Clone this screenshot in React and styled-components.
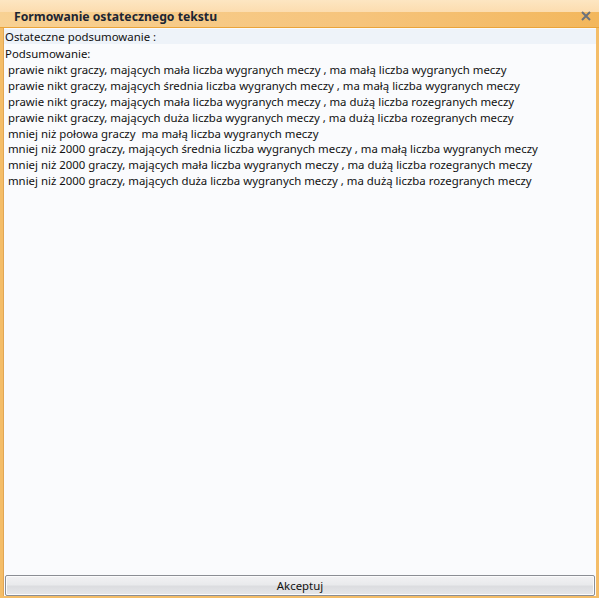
import React from "react";
import styled, { createGlobalStyle } from "styled-components";

const Global = createGlobalStyle`
  html, body { margin: 0; padding: 0; background: #ffffff; }
  body { font-family: "Noto Sans", "DejaVu Sans", sans-serif; }
`;

const Window = styled.div`
  width: 599px;
  height: 598px;
  box-sizing: border-box;
  display: flex;
  flex-direction: column;
  background: #f4bd68;
  padding: 0 3px 2px 3px;
`;

const TitleBar = styled.div`
  height: 28px;
  margin: 0 -3px;
  display: flex;
  align-items: center;
  justify-content: space-between;
  padding: 0 8px 0 14px;
  box-sizing: border-box;
  border-bottom: 1px solid #eaa43a;
  background:
    linear-gradient(180deg, #fde6c2 0%, #fcdcae 46%, transparent 46%),
    linear-gradient(90deg, #f8d193 0%, #f6c47c 60%, #f3b75c 100%);
`;

const Title = styled.div`
  font-family: "Noto Sans", "DejaVu Sans", sans-serif;
  font-weight: bold;
  font-size: 12.2px;
  color: #1c2533;
  padding-top: 5px;
`;

const Close = styled.div`
  width: 10px;
  height: 10px;
  margin-top: 4px;
  display: flex;
  align-items: center;
  justify-content: center;
`;

const Body = styled.div`
  flex: 1;
  display: flex;
  flex-direction: column;
  background: #fafbfd;
  border-left: 1px solid #e2a653;
`;

const Label = styled.div`
  height: 15px;
  line-height: 15px;
  margin-top: 1px;
  padding-left: 1px;
  background: #eef3f9;
  font-size: 11.4px;
  color: #111;
`;

const TextArea = styled.div`
  flex: 1;
  background: #fafbfd;
  font-size: 11.4px;
  color: #111;
  line-height: 15.9px;
  white-space: pre;
  padding: 2px 0 0 1px;
`;

const ButtonRow = styled.div`
  padding: 1px 1px 0 1px;
  background: #fafbfd;
`;

const Button = styled.div`
  height: 21px;
  box-sizing: border-box;
  border: 1px solid #8b8e94;
  border-radius: 2px;
  background: linear-gradient(180deg, #f2f2f4 0%, #e9eaec 45%, #dcdde0 55%, #e6e7ea 100%);
  box-shadow: inset 0 0 0 1px #fbfbfc;
  display: flex;
  align-items: center;
  justify-content: center;
  font-size: 11.4px;
  color: #111;
`;

const lines = [
  "Podsumowanie:",
  " prawie nikt graczy, mających mała liczba wygranych meczy , ma małą liczba wygranych meczy",
  " prawie nikt graczy, mających średnia liczba wygranych meczy , ma małą liczba wygranych meczy",
  " prawie nikt graczy, mających mała liczba wygranych meczy , ma dużą liczba rozegranych meczy",
  " prawie nikt graczy, mających duża liczba wygranych meczy , ma dużą liczba rozegranych meczy",
  " mniej niż połowa graczy  ma małą liczba wygranych meczy",
  " mniej niż 2000 graczy, mających średnia liczba wygranych meczy , ma małą liczba wygranych meczy",
  " mniej niż 2000 graczy, mających mała liczba wygranych meczy , ma dużą liczba rozegranych meczy",
  " mniej niż 2000 graczy, mających duża liczba wygranych meczy , ma dużą liczba rozegranych meczy",
];

export default function App() {
  return (
    <>
      <Global />
      <Window>
        <TitleBar>
          <Title>Formowanie ostatecznego tekstu</Title>
          <Close>
            <svg width="10" height="10" viewBox="0 0 10 10">
              <path d="M1 1 L9 9 M9 1 L1 9" stroke="#6b717c" strokeWidth="2" />
            </svg>
          </Close>
        </TitleBar>
        <Body>
          <Label>Ostateczne podsumowanie :</Label>
          <TextArea>{lines.join("\n")}</TextArea>
          <ButtonRow>
            <Button>Akceptuj</Button>
          </ButtonRow>
        </Body>
      </Window>
    </>
  );
}
